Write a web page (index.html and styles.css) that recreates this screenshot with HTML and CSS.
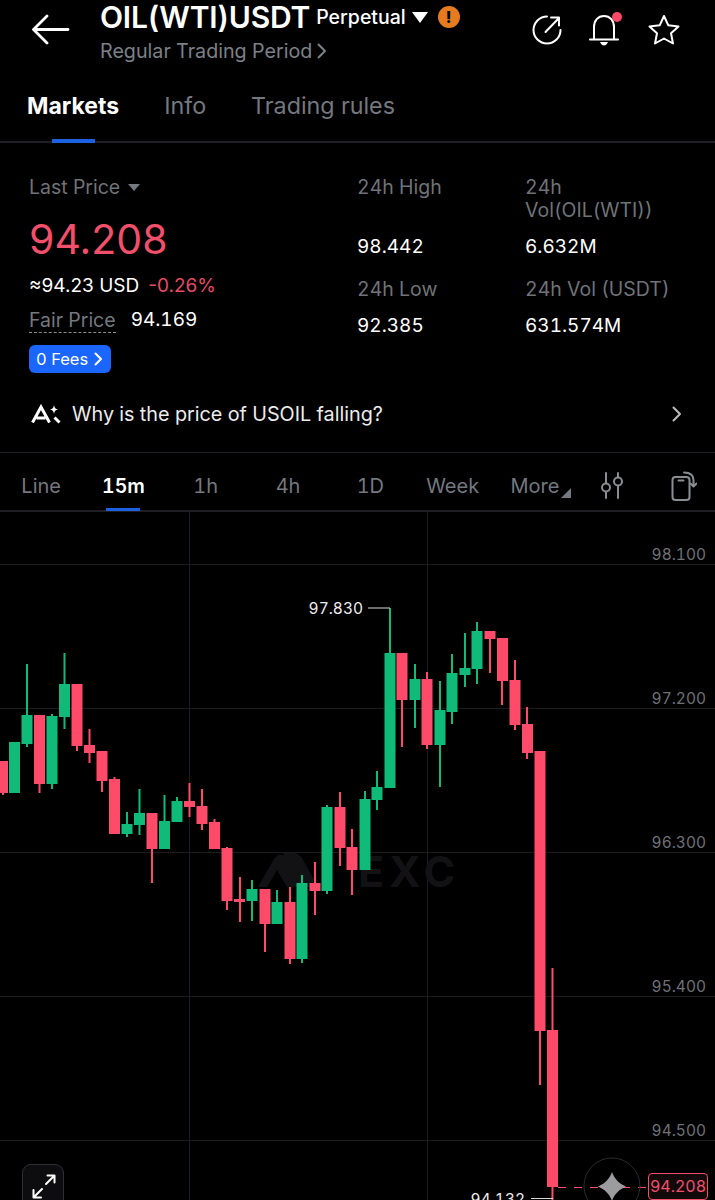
FILE: index.html
```html
<!DOCTYPE html>
<html lang="en">

<head>
    <meta charset="UTF-8">
    <meta name="viewport" content="width=device-width, initial-scale=1.0">
    <title>OIL(WTI)USDT Perpetual</title>
    <link rel="stylesheet" href="styles.css">
</head>

<body>
    <header class="top-bar">
        <svg class="back-icon" width="38" height="32" viewBox="0 0 38 32">
            <path d="M36 15.500H2M15 2 1.500 15.500 15 29" />
        </svg>
        <div class="title-block">
            <div class="title-row">
                <span class="symbol">OIL(WTI)USDT</span>
                <span class="contract">Perpetual</span>
                <span class="caret-white"></span>
                <span class="warn-badge">!</span>
            </div>
            <div class="period">Regular Trading Period
                <svg width="10" height="16" viewBox="0 0 10 16"><path d="M1.500 1.500 8 8l-6.500 6.500" /></svg>
            </div>
        </div>
        <div class="top-actions">
            <svg width="32" height="32" viewBox="0 0 32 32">
                <path d="M16 2.500A13.500 13.500 0 1 0 29.500 16M14.500 18 27.500 4.500M20 3.500H28V11.500" />
            </svg>
            <span class="bell">
                <svg width="30" height="32" viewBox="0 0 30 32">
                    <path d="M1 25.500H29M5 25.500V13C5 6.500 9 2 15 2s10 4.500 10 11V25.500" />
                    <path class="solid" d="M11 28h8c-1 2.500-2.500 3.500-4 3.500S12 30.500 11 28z" />
                </svg>
                <i class="bell-dot"></i>
            </span>
            <svg width="34" height="32" viewBox="0 0 34 32">
                <path d="M17 2 21.200 11.200 31.500 12.400 24 19.300 26 29.500 17 24.500 8 29.500 10 19.300 2.500 12.400 12.800 11.200Z" />
            </svg>
        </div>
    </header>

    <nav class="main-tabs">
        <a class="main-tab active">Markets</a>
        <a class="main-tab">Info</a>
        <a class="main-tab">Trading rules</a>
    </nav>

    <section class="stats">
        <div class="price-col">
            <div class="stat-label">Last Price <span class="caret-grey"></span></div>
            <div class="last-price">94.208</div>
            <div class="usd-row"><span>≈94.23 USD</span><span class="change">-0.26%</span></div>
            <div class="fair-row"><span class="fair-label">Fair Price</span><span>94.169</span></div>
            <a class="fee-chip">0 Fees
                <svg width="9" height="14" viewBox="0 0 9 14"><path d="M1.500 1.500 7 7l-5.500 5.500" /></svg>
            </a>
        </div>
        <div class="stat-grid">
            <div class="stat-label tall">24h High</div>
            <div class="stat-label tall">24h<br>Vol(OIL(WTI))</div>
            <div class="stat-value">98.442</div>
            <div class="stat-value">6.632M</div>
            <div class="stat-label low">24h Low</div>
            <div class="stat-label low">24h Vol (USDT)</div>
            <div class="stat-value">92.385</div>
            <div class="stat-value">631.574M</div>
        </div>
    </section>

    <div class="ai-row">
        <svg class="ai-icon" width="30" height="20" viewBox="0 0 30 20">
            <path class="thick" d="M1.500 18.500 10 3l8.500 15.500M5.500 14h9" />
            <path class="solid" d="M23 1c.5 3 1.500 4 4 4.500-2.500.5-3.500 1.500-4 4.500-.5-3-1.500-4-4-4.500 2.500-.5 3.500-1.500 4-4.500z" />
            <path class="thick" d="M23.500 13.500 28.500 18.500" />
        </svg>
        <span class="ai-text">Why is the price of USOIL falling?</span>
        <svg class="ai-chevron" width="10" height="16" viewBox="0 0 10 16"><path d="M1.500 1.500 8 8l-6.500 6.500" /></svg>
    </div>

    <div class="interval-bar">
        <a class="interval">Line</a>
        <a class="interval active">15m</a>
        <a class="interval">1h</a>
        <a class="interval">4h</a>
        <a class="interval">1D</a>
        <a class="interval">Week</a>
        <a class="interval more">More<i class="corner"></i></a>
        <svg class="tool-icon" width="24" height="28" viewBox="0 0 24 28">
            <path d="M5 1V11M5 20V26M17 1V5M17 14V26" />
            <circle cx="5" cy="15.500" r="4" />
            <circle cx="17" cy="9.500" r="4" />
        </svg>
        <svg class="tool-icon" width="26" height="30" viewBox="0 0 26 30">
            <rect x="1.500" y="6" width="17" height="23" rx="3" />
            <path d="M7.500 9.500H12.500M13 1.500C19 1.500 22.500 4 22.500 9V15M19.500 12.500 22.500 15.500 25.500 12.500" />
        </svg>
    </div>

    <section class="chart">
        <svg class="chart-svg" width="715" height="688" viewBox="0 512 715 688">
            <!-- grid -->
            <path class="grid" d="M0 564.500H715M0 708.500H715M0 852.500H715M0 996.500H715M0 1140.500H715M189.500 512V1200M427.500 512V1200" />

            <!-- watermark -->
            <path class="mark" d="M258 887 274 859C277 854 284 853 287 858L303 887H287L277 870 267 887ZM283 853H293C297 853 300 855 302 858L318 887H302Z" />
            <text class="mark-text" x="358" y="887">EXC</text>

            <!-- rising candles: wick then body -->
            <path class="up" d="
                M9 742h11v51H9z
                M26 664h2v83h-2zM21.500 715h11v29h-11z
                M46.500 716h11v68h-11zM51 714h2v75h-2z
                M63.500 653h2v76h-2zM59 684h11v33H59z
                M126 812h2v25h-2zM121.500 824h11v10h-11z
                M138.500 789h2v46h-2zM134 813h11v12h-11z
                M163.500 795h2v54h-2zM159 821h11v28h-11z
                M176 797h2v25h-2zM171.500 801h11v21h-11z
                M251 880h2v41h-2zM246.500 889h11v12h-11z
                M276 890h2v34h-2zM271.500 902h11v22h-11z
                M301 875h2v88h-2zM296.500 883h11v76h-11z
                M326 805h2v89h-2zM321.500 807h11v84h-11z
                M364 791h2v79h-2zM359.500 799h11v71h-11z
                M376 771h2v39h-2zM371.500 787h11v13h-11z
                M389 608h2v45h-2zM384.500 653h11v135h-11z
                M414 664h2v64h-2zM409.500 679h11v21h-11z
                M439 681h2v106h-2zM434.500 710h11v35h-11z
                M451 654h2v70h-2zM446.500 673h11v39h-11z
                M464 633h2v54h-2zM459.500 668h11v7h-11z
                M476 622h2v62h-2zM471.500 631h11v38h-11z" />

            <!-- falling candles -->
            <path class="down" d="
                M-3 761h11v32H-3zM2 793h2v2H2z
                M34 715h11v69H34zM38.500 784h2v9h-2z
                M71.500 684h11v62h-11zM76 746h2v5h-2z
                M88.500 729h2v34h-2zM84 745h11v8H84z
                M96.500 751h11v30H96.500zM101 781h2v11h-2z
                M109 779h11v55h-11zM113.500 777h2v2h-2z
                M146.500 813h11v36h-11zM151 849h2v34h-2z
                M188.500 783h2v34h-2zM184 801h11v6h-11z
                M201 789h2v41h-2zM196.500 806h11v18h-11z
                M209 822h11v27h-11zM213.500 819h2v3h-2z
                M221.500 848h11v53h-11zM226 847h2v63h-2z
                M239 877h2v45h-2zM234 899h11v3h-11z
                M259.500 889h11v35h-11zM264 924h2v28h-2z
                M289 887h2v77h-2zM284.500 902h11v57h-11z
                M314 862h2v53h-2zM309.500 883h11v8h-11z
                M339 792h2v74h-2zM334.500 807h11v41h-11z
                M351 829h2v66h-2zM346.500 847h11v23h-11z
                M396.500 653h11v47h-11zM401 700h2v47h-2z
                M426 672h2v77h-2zM421.500 679h11v66h-11z
                M484.500 631h11v8h-11zM489 639h2v34h-2z
                M497 638h11v43h-11zM501 681h2v24h-2z
                M514 660h2v70h-2zM509.500 680h11v45h-11z
                M526 707h2v52h-2zM522 724h11v29h-11z
                M534.500 751h11v280h-11zM539 1031h2v54h-2z
                M551.500 968h2v232h-2zM547 1030h11v157h-11z" />

            <!-- price axis -->
            <text class="axis" x="706" y="560">98.100</text>
            <text class="axis" x="706" y="704">97.200</text>
            <text class="axis" x="706" y="848">96.300</text>
            <text class="axis" x="706" y="992">95.400</text>
            <text class="axis" x="706" y="1136">94.500</text>

            <!-- high and low markers -->
            <path class="marker" d="M368 608H390M531 1198.500H553" />
            <text class="extreme" x="363" y="614">97.830</text>
            <text class="extreme" x="525" y="1205">94.132</text>

            <!-- current price -->
            <path class="price-line" d="M558 1187.500H648" />
            <circle class="ai-ring" cx="612" cy="1186" r="28" />
            <path class="spark" d="M612 1172C614.500 1179 619 1183.500 626 1186.500 619 1189.500 614.500 1194 612 1201 609.500 1194 605 1189.500 598 1186.500 605 1183.500 609.500 1179 612 1172z" />
        </svg>
        <span class="price-tag">94.208</span>
        <a class="expand-btn">
            <svg width="24" height="26" viewBox="0 0 24 26">
                <path d="M14 11 22 3M15.500 2.500H22.500V9.500M10 16 2 24M1.500 17V24.500H9" />
            </svg>
        </a>
    </section>
</body>

</html>
```

FILE: styles.css
```css
* {
    box-sizing: border-box;
}

html,
body {
    height: 1200px;
    overflow: hidden;
}

body {
    font-family: Inter, "Liberation Sans", sans-serif;
    font-variant-numeric: tabular-nums;
    background-color: #000;
    color: #fff;
    margin: 0;
    padding: 0;
}

svg {
    display: block;
    flex: none;
}

svg path,
svg rect,
svg circle {
    fill: none;
    stroke: currentColor;
    stroke-width: 2;
    stroke-linecap: round;
    stroke-linejoin: round;
}

svg .solid {
    fill: currentColor;
    stroke: none;
}

/* top bar */
.top-bar {
    display: flex;
    height: 75px;
    padding-left: 32px;
}

.back-icon {
    margin-top: 14px;
}

.back-icon path {
    stroke-width: 2.800;
}

.title-block {
    margin-left: 30px;
}

.title-row {
    display: flex;
    align-items: center;
    height: 36px;
    margin-top: -1px;
}

.symbol {
    font-size: 30px;
    font-weight: 600;
    letter-spacing: -0.200px;
}

.contract {
    font-size: 19.500px;
    font-weight: 500;
    margin-left: 6px;
}

.caret-white {
    width: 0;
    height: 0;
    margin-left: 6px;
    border-left: 8px solid transparent;
    border-right: 8px solid transparent;
    border-top: 11px solid #fff;
}

.warn-badge {
    display: flex;
    align-items: center;
    justify-content: center;
    width: 22px;
    height: 22px;
    margin-left: 10px;
    border-radius: 50%;
    background-color: #e67a1e;
    color: #000;
    font-size: 16px;
    font-weight: 800;
}

.period {
    display: flex;
    align-items: center;
    gap: 5px;
    margin-top: 4px;
    color: #7c8087;
    font-size: 19.700px;
    line-height: 24px;
}

.top-actions {
    display: flex;
    gap: 26px;
    margin-left: auto;
    margin-top: 14px;
    padding-right: 34px;
}

.bell {
    position: relative;
    margin-right: 2px;
    height: 32px;
}

.bell-dot {
    position: absolute;
    top: -2px;
    right: -3px;
    width: 10px;
    height: 10px;
    border-radius: 50%;
    background-color: #fb4a68;
}

/* markets / info tabs */
.main-tabs {
    display: flex;
    gap: 45px;
    height: 68px;
    padding-left: 27px;
    border-bottom: 2px solid #1e1f24;
}

.main-tab {
    position: relative;
    padding-top: 17px;
    color: #74787f;
    font-size: 23.300px;
    line-height: 28px;
}

.main-tab.active {
    color: #fff;
    font-size: 23px;
    font-weight: 700;
}

.main-tab.active::after {
    content: "";
    position: absolute;
    left: 25px;
    bottom: -2px;
    width: 43px;
    height: 4px;
    background-color: #1c62e0;
}

/* price block */
.stats {
    display: flex;
    padding: 33px 0 0 29px;
}

.price-col {
    width: 328px;
    margin-top: -1px;
}

.stat-label {
    color: #6f7379;
    font-size: 19.500px;
    line-height: 24px;
}

.caret-grey {
    display: inline-block;
    width: 0;
    height: 0;
    margin-left: 3px;
    vertical-align: 3px;
    border-left: 6px solid transparent;
    border-right: 6px solid transparent;
    border-top: 7px solid #74787f;
}

.last-price {
    margin-top: 16px;
    color: #f24f6b;
    font-size: 41px;
    font-variant-numeric: normal;
    line-height: 48px;
}

.usd-row {
    display: flex;
    gap: 9px;
    margin-top: 11px;
    font-size: 19px;
    font-variant-numeric: normal;
    line-height: 24px;
}

.change {
    color: #e64a64;
}

.fair-row {
    display: flex;
    gap: 15px;
    margin-top: 10px;
    font-size: 19px;
    line-height: 24px;
}

.fair-label {
    color: #74787f;
    font-size: 19.500px;
    border-bottom: 1px dashed #8a8d92;
}

.fee-chip {
    display: flex;
    align-items: center;
    gap: 6px;
    width: 82px;
    height: 28px;
    margin-top: 12px;
    padding-left: 7px;
    border-radius: 6px;
    background-color: #1a66ff;
    font-size: 16.500px;
}

.stat-grid {
    display: grid;
    grid-template-columns: 168px 180px;
    align-content: start;
}

.stat-label.tall {
    min-height: 47px;
    line-height: 23px;
}

.stat-value {
    margin-top: 12px;
    font-size: 19px;
    line-height: 24px;
}

.stat-label.low {
    margin-top: 18px;
    margin-bottom: 1px;
}

/* ai row */
.ai-row {
    display: flex;
    align-items: center;
    height: 48px;
    margin-top: 17px;
    padding: 0 33px 0 31px;
}

.ai-icon .thick {
    stroke-width: 3;
    stroke-linecap: butt;
    stroke-linejoin: miter;
}

.ai-text {
    margin-left: 11px;
    color: #ececec;
    font-size: 19.800px;
}

.ai-chevron {
    margin-left: auto;
    color: #bbb;
}

/* interval bar */
.interval-bar {
    display: flex;
    align-items: center;
    height: 60px;
    margin-top: 14px;
    padding-top: 9px;
    border-top: 1px solid #1e1f24;
    border-bottom: 2px solid #1e1f24;
}

.interval {
    position: relative;
    display: flex;
    align-items: center;
    justify-content: center;
    width: 82.300px;
    height: 100%;
    color: #74787f;
    font-size: 20px;
}

.interval.active {
    color: #fff;
    font-size: 19.500px;
    font-weight: 600;
}

.interval.active::after {
    content: "";
    position: absolute;
    left: 24px;
    bottom: -1px;
    width: 34px;
    height: 3px;
    background-color: #1c62e0;
}

.corner {
    position: absolute;
    right: 5px;
    bottom: 12px;
    width: 0;
    height: 0;
    border-left: 10px solid transparent;
    border-bottom: 10px solid #74787f;
}

.tool-icon {
    margin-left: 25px;
    color: #8a8d92;
}

.tool-icon + .tool-icon {
    margin-left: 46px;
}

/* chart */
.chart {
    position: relative;
    height: 689px;
    overflow: hidden;
}

.chart-svg path.grid {
    stroke: #1b1c20;
    stroke-width: 1;
    stroke-linecap: butt;
}

.chart-svg path.mark {
    fill: #121215;
    stroke: none;
}

.mark-text {
    fill: #121215;
    font-size: 43px;
    font-weight: 700;
    letter-spacing: 5px;
}

.chart-svg path.up {
    fill: #10bb7a;
    stroke: none;
}

.chart-svg path.down {
    fill: #ff4a69;
    stroke: none;
}

.axis {
    fill: #6e7177;
    font-size: 15.500px;
    text-anchor: end;
}

.extreme {
    fill: #ececec;
    font-size: 15.500px;
    text-anchor: end;
}

.chart-svg path.marker {
    stroke: #d8d8d8;
    stroke-width: 1.200;
    stroke-linecap: butt;
}

.chart-svg path.price-line {
    stroke: #ff4a69;
    stroke-width: 1.200;
    stroke-linecap: butt;
    stroke-dasharray: 8 8;
}

.chart-svg circle.ai-ring {
    stroke: #2b2b2e;
    stroke-width: 1;
}

.chart-svg path.spark {
    fill: #9c9c9e;
    stroke: none;
}

.price-tag {
    position: absolute;
    top: 661px;
    right: 7px;
    width: 60px;
    height: 27px;
    border: 1.500px solid #f24f6b;
    border-radius: 4px;
    background-color: #12090b;
    color: #f24f6b;
    font-size: 16px;
    line-height: 25px;
    text-align: center;
}

.expand-btn {
    position: absolute;
    top: 652px;
    left: 22px;
    width: 42px;
    height: 50px;
    padding: 8px 0 0 9px;
    border: 1.500px solid #2e2f33;
    border-radius: 9px;
    background-color: #0d0d0f;
}
```
